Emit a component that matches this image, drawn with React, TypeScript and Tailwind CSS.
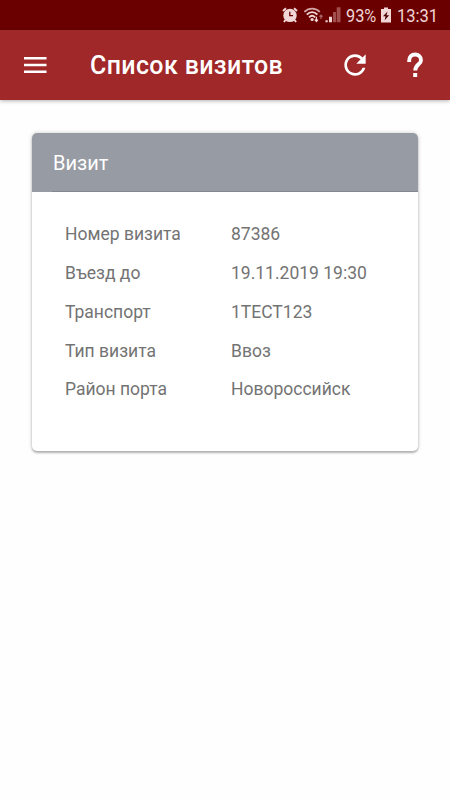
const rows = [
  { label: 'Номер визита', value: '87386' },
  { label: 'Въезд до', value: '19.11.2019 19:30' },
  { label: 'Транспорт', value: '1ТЕСТ123' },
  { label: 'Тип визита', value: 'Ввоз' },
  { label: 'Район порта', value: 'Новороссийск' },
];

function AlarmIcon() {
  return (
    <svg className="w-4 h-4 shrink-0" viewBox="0 0 16 16" fill="none">
      <circle cx="8" cy="8.4" r="6.7" fill="#f0d6d6" />
      <path d="M1 4L4 1.2M15 4L12 1.2M3.4 13L2 15M12.6 13L14 15" stroke="#f0d6d6" strokeWidth="2" />
      <path d="M7.8 4.8V8.7H11" stroke="#6b0000" strokeWidth="1.3" />
    </svg>
  );
}

function WifiIcon() {
  return (
    <svg className="w-5 h-4 shrink-0" viewBox="0 0 20 16" fill="none">
      <path d="M0.4 5C4.6 0.5 11.6 0.5 15.8 5" stroke="#d3a4a4" strokeWidth="1.8" />
      <path d="M2.8 7.6C6.1 4.3 10.1 4.3 13.4 7.6M5.1 10.3C7.1 8.3 9.1 8.3 11.1 10.3" stroke="#f0d6d6" strokeWidth="1.9" />
      <circle cx="8.1" cy="12.5" r="1.6" fill="#f0d6d6" />
      <path d="M12.400 9.800V14.200M10.800 12.600L12.400 14.400L14 12.600" stroke="#f0d6d6" strokeWidth="1.3" />
      <path d="M17 12V8.200M15.500 9.800L17 8.200L18.500 9.800" stroke="#a86464" strokeWidth="1.3" />
    </svg>
  );
}

function SignalIcon() {
  return (
    <svg className="w-4 h-4 shrink-0" viewBox="0 0 16 16">
      <path d="M0.500 13.300h2.200v2h-2.200zM4 9.700h3v5.600H4z" fill="#f0d6d6" />
      <path d="M8 5h3v10.300H8zM11.700 0.300h3.800v15h-3.800z" fill="#a04e4e" />
    </svg>
  );
}

function BatteryIcon() {
  return (
    <svg className="w-2.5 h-4 shrink-0" viewBox="0 0 10 16">
      <path d="M3 0.500h4V2h3V15.500H0V2h3z" fill="#f0d6d6" />
      <path d="M6.500 4.500L2 9.200h2.500L3.700 13.200l4.500-5H5.500z" fill="#4a0000" />
    </svg>
  );
}

function StatusBar() {
  return (
    <div className="h-[30px] bg-[#6b0000] flex items-center pl-[282px] text-[19px] leading-none text-[#f0d6d6]">
      <AlarmIcon />
      <span className="w-1.5" />
      <WifiIcon />
      <span className="w-px" />
      <SignalIcon />
      <span className="w-[35px] ml-[5px] pt-px">
        <span className="inline-block origin-left scale-x-[0.86]">93%</span>
      </span>
      <BatteryIcon />
      <span className="ml-[6px] pt-px">
        <span className="inline-block origin-left scale-x-[0.87]">13:31</span>
      </span>
    </div>
  );
}

function Header() {
  return (
    <header className="h-[70px] bg-[#a02828] flex items-center text-white shadow-[0_1px_4px_rgba(0,0,0,0.3)]">
      <button className="ml-5 w-[30px] h-[30px]">
        <svg className="w-[30px] h-[30px]" viewBox="0 0 30 30" fill="currentColor">
          <path d="M4 7h22.500v2.500H4zM4 13.700h22.500v2.500H4zM4 20.400h22.500v2.500H4z" />
        </svg>
      </button>
      <h1 className="ml-10 w-[249px] pt-0.5 text-[25px] leading-[30px] font-medium tracking-[0.36px] whitespace-nowrap">
        Список визитов
      </h1>
      <button className="w-8 h-8">
        <svg className="w-8 h-8" viewBox="0 0 24 24" fill="currentColor">
          <path d="M17.650 6.350C16.200 4.900 14.210 4 12 4c-4.420 0-7.990 3.580-7.990 8s3.570 8 7.990 8c3.730 0 6.840-2.550 7.730-6h-2.080c-.82 2.330-3.040 4-5.650 4-3.310 0-6-2.690-6-6s2.690-6 6-6c1.660 0 3.140.69 4.220 1.780L13 11h7V4l-2.350 2.350z" />
        </svg>
      </button>
      <button className="ml-7 w-8 h-8">
        <svg className="w-8 h-8" viewBox="0 0 32 32" fill="none">
          <path d="M10.200 12.900V11.400C10.200 8.100 12.600 5.500 16.100 5.500S22 8.100 22 11.200C22 15.200 16.200 15.700 16.200 21.600" stroke="currentColor" strokeWidth="3.900" />
          <path d="M14.200 24h4v4h-4z" fill="currentColor" />
        </svg>
      </button>
    </header>
  );
}

function VisitCard() {
  return (
    <section className="mx-8 mt-[33px] h-[318px] rounded-[5px] bg-white overflow-hidden shadow-[0_2px_2px_rgba(0,0,0,0.24),0_0_4px_rgba(0,0,0,0.2)]">
      <div className="h-[59px] bg-[#979ba3] pl-5 flex">
        <h2 className="flex-1 border-b border-[#85888f] pl-px text-[20px] leading-[60px] text-white">Визит</h2>
      </div>
      <dl className="pl-[33px] pt-[23px] text-[17.5px] text-[#737373]">
        {rows.map((row) => (
          <div key={row.label} className="flex h-[38.8px] items-center">
            <dt className="w-[166px]">{row.label}</dt>
            <dd>{row.value}</dd>
          </div>
        ))}
      </dl>
    </section>
  );
}

export default function App() {
  return (
    <div className="h-[800px] bg-[#fefefe] font-['Roboto',sans-serif]">
      <StatusBar />
      <Header />
      <VisitCard />
    </div>
  );
}
